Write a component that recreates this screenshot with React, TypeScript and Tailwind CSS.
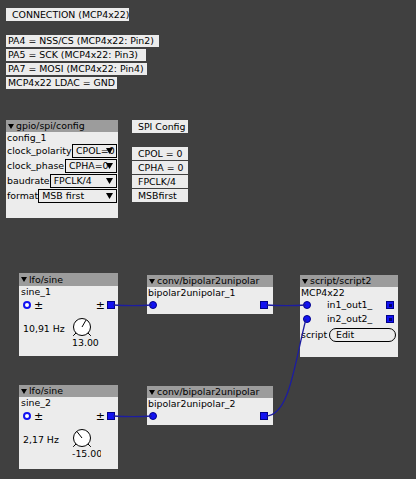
type Kids = { children?: React.ReactNode; className?: string };

const Tri = () => (
  <svg width="6" height="5" viewBox="0 0 6 5" className="shrink-0">
    <polygon points="0,0 6,0 3,5" fill="black" />
  </svg>
);

const Header = ({ title, className = "" }: { title: string; className?: string }) => (
  <div className={"flex items-center gap-[2px] bg-[#9c9c9c] pl-[2px] whitespace-nowrap overflow-hidden " + className}>
    <Tri />
    <span>{title}</span>
  </div>
);

const Comment = ({ children, className = "" }: Kids) => (
  <div className={"absolute flex items-center bg-[#ececec] whitespace-nowrap overflow-hidden " + className}>{children}</div>
);

const Inlet = () => <span className="block w-[8px] h-[8px] rounded-full bg-[#1212f2] border border-[#00008a]" />;
const InletOpen = () => <span className="block w-[8px] h-[8px] rounded-full border-2 border-[#1212f2] bg-white" />;
const Outlet = () => <span className="block w-[8px] h-[8px] bg-[#1212f2] border border-[#00008a]" />;
const OutletOpen = () => (
  <span className="flex items-center justify-center w-[8px] h-[8px] bg-[#1212f2] border border-[#00008a]">
    <span className="block w-[3px] h-[3px] bg-[#00006a]" />
  </span>
);

const Select = ({ text, className = "" }: { text: string; className?: string }) => (
  <div className={"relative flex items-center h-[14px] border border-black bg-[#ececec] pl-[3px] overflow-hidden whitespace-nowrap " + className}>
    {text}
    <svg width="7" height="6" viewBox="0 0 7 6" className="absolute right-[3px] top-[3px]">
      <polygon points="0,0 7,0 3.5,6" fill="black" />
    </svg>
  </div>
);

const ParamRow = ({ label, text, className }: { label: string; text: string; className: string }) => (
  <div className="flex items-center justify-between pl-[1px] pr-[1px]">
    <span className="whitespace-nowrap">{label}</span>
    <Select text={text} className={className} />
  </div>
);

function Knob({ angle }: { angle: number }) {
  const cx = 15;
  const cy = 11;
  const r = 8.5;
  const rad = (d: number) => (d * Math.PI) / 180;
  const pt = (d: number, rr: number) => [cx + Math.sin(rad(d)) * rr, cy - Math.cos(rad(d)) * rr];
  const [ix, iy] = pt(angle, 8);
  const [a1, b1] = pt(135, r);
  const [a2, b2] = pt(135, 12.5);
  const [c1, d1] = pt(225, r);
  const [c2, d2] = pt(225, 12.5);
  return (
    <svg width="30" height="21" viewBox="0 0 30 21" className="block">
      <circle cx={cx} cy={cy} r={r} fill="white" stroke="black" strokeWidth="1" />
      <line x1={cx} y1={cy} x2={ix} y2={iy} stroke="black" strokeWidth="1" />
      <line x1={a1} y1={b1} x2={a2} y2={b2} stroke="black" strokeWidth="1" />
      <line x1={c1} y1={d1} x2={c2} y2={d2} stroke="black" strokeWidth="1" />
    </svg>
  );
}

const LfoBody = ({ name, freq, value, angle }: { name: string; freq: string; value: string; angle: number }) => (
  <>
    <div className="h-[11px] flex items-center pl-[2px]">{name}</div>
    <div className="h-[16px] flex items-center justify-between pl-[4px] pr-[3px]">
      <div className="flex items-center gap-[3px]">
        <InletOpen />
        <span className="text-[11px]">±</span>
      </div>
      <div className="flex items-center gap-[2px]">
        <span className="text-[11px]">±</span>
        <Outlet />
      </div>
    </div>
    <div className="flex">
      <div className="w-[48px] pl-[4px] pt-[11px] whitespace-nowrap">{freq}</div>
      <div className="flex flex-col pt-[3px]">
        <Knob angle={angle} />
        <div className="ml-[5px] w-[29px] h-[11px] flex items-center overflow-hidden whitespace-nowrap">{value}</div>
      </div>
    </div>
  </>
);

const BipBody = ({ name }: { name: string }) => (
  <>
    <div className="h-[11px] flex items-center pl-[1px]">{name}</div>
    <div className="h-[14px] flex items-center justify-between pl-[2px] pr-[5px]">
      <Inlet />
      <Outlet />
    </div>
  </>
);

export default function App() {
  return (
    <div className="relative w-[416px] h-[479px] overflow-hidden bg-[#404040] font-['DejaVu_Sans',sans-serif] text-[9.4px] leading-none text-black">
      <Comment className="left-[6px] top-[8px] w-[123px] h-[13px] pl-[6px]">CONNECTION (MCP4x22)</Comment>
      <Comment className="left-[6px] top-[35px] w-[153px] h-[12px] pl-[2px]">PA4 = NSS/CS (MCP4x22: Pin2)</Comment>
      <Comment className="left-[6px] top-[49px] w-[140px] h-[12px] pl-[2px]">PA5 = SCK (MCP4x22: Pin3)</Comment>
      <Comment className="left-[6px] top-[63px] w-[141px] h-[12px] pl-[2px]">PA7 = MOSI (MCP4x22: Pin4)</Comment>
      <Comment className="left-[6px] top-[77px] w-[111px] h-[12px] pl-[2px]">MCP4x22 LDAC = GND</Comment>

      <Comment className="left-[132px] top-[120px] w-[56px] h-[13px] pl-[6px]">SPI Config</Comment>
      <Comment className="left-[132px] top-[147px] w-[56px] h-[13px] pl-[6px]">CPOL = 0</Comment>
      <Comment className="left-[132px] top-[161px] w-[56px] h-[13px] pl-[6px]">CPHA = 0</Comment>
      <Comment className="left-[132px] top-[175px] w-[56px] h-[13px] pl-[6px]">FPCLK/4</Comment>
      <Comment className="left-[132px] top-[189px] w-[56px] h-[13px] pl-[6px]">MSBfirst</Comment>

      {/* gpio/spi/config */}
      <div className="absolute left-[6px] top-[120px] w-[112px] h-[98px] bg-[#ececec]">
        <Header title="gpio/spi/config" className="h-[12px]" />
        <div className="h-[12px] flex items-center pl-[1px]">config_1</div>
        <div className="flex flex-col gap-[1px]">
          <ParamRow label="clock_polarity" text="CPOL=0" className="w-[45px]" />
          <ParamRow label="clock_phase" text="CPHA=0" className="w-[52px]" />
          <ParamRow label="baudrate" text="FPCLK/4" className="w-[68px]" />
          <ParamRow label="format" text="MSB first" className="w-[79px]" />
        </div>
      </div>

      {/* lfo 1 */}
      <div className="absolute left-[19px] top-[273px] w-[99px] h-[83px] bg-[#ececec]">
        <Header title="lfo/sine" className="h-[13px]" />
        <LfoBody name="sine_1" freq="10,91 Hz" value="13.00" angle={30} />
      </div>

      {/* lfo 2 */}
      <div className="absolute left-[19px] top-[385px] w-[99px] h-[84px] bg-[#ececec]">
        <Header title="lfo/sine" className="h-[12px]" />
        <LfoBody name="sine_2" freq="2,17 Hz" value="-15.00" angle={-38} />
      </div>

      {/* bipolar2unipolar */}
      <div className="absolute left-[147px] top-[275px] w-[126px] h-[39px] bg-[#ececec]">
        <Header title="conv/bipolar2unipolar" className="h-[12px]" />
        <BipBody name="bipolar2unipolar_1" />
      </div>
      <div className="absolute left-[147px] top-[386px] w-[126px] h-[39px] bg-[#ececec]">
        <Header title="conv/bipolar2unipolar" className="h-[12px]" />
        <BipBody name="bipolar2unipolar_2" />
      </div>

      {/* script */}
      <div className="absolute left-[300px] top-[275px] w-[98px] h-[82px] bg-[#ececec]">
        <Header title="script/script2" className="h-[12px]" />
        <div className="h-[11px] flex items-center pl-[1px]">MCP4x22</div>
        <div className="h-[14px] flex items-center pl-[3px] pr-[4px]">
          <Inlet />
          <span className="ml-[16px]">in1_out1_</span>
          <span className="ml-auto"><OutletOpen /></span>
        </div>
        <div className="h-[14px] flex items-center pl-[3px] pr-[4px]">
          <Inlet />
          <span className="ml-[16px]">in2_out2_</span>
          <span className="ml-auto"><OutletOpen /></span>
        </div>
        <div className="h-[18px] flex items-center pl-[1px]">
          <span>script</span>
          <div className="ml-auto mr-[2px] w-[67px] h-[14px] flex items-center pl-[6px] rounded-full border border-black">Edit</div>
        </div>
      </div>

      {/* wires */}
      <svg width="416" height="479" className="absolute left-0 top-0 pointer-events-none">
        <g fill="none" stroke="#1c1ca0" strokeWidth="1.3">
          <path d="M113 305 C132 306 134 306 152 305" />
          <path d="M113 416 C132 417 134 417 152 416" />
          <path d="M266 305 C286 306 288 306 306 305" />
          <path d="M266 416 C290 416 295 360 306 319" />
        </g>
      </svg>
    </div>
  );
}
